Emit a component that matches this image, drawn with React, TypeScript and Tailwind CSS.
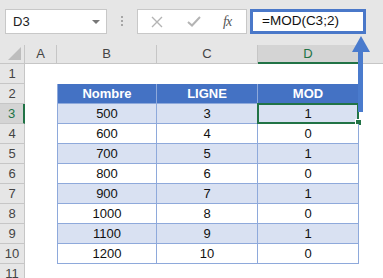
import React from "react";

const rows = [
  { n: 500, l: 3, m: 1 },
  { n: 600, l: 4, m: 0 },
  { n: 700, l: 5, m: 1 },
  { n: 800, l: 6, m: 0 },
  { n: 900, l: 7, m: 1 },
  { n: 1000, l: 8, m: 0 },
  { n: 1100, l: 9, m: 1 },
  { n: 1200, l: 10, m: 0 },
];

function FormulaBar() {
  return (
    <div className="h-[45px] bg-[#e6e6e6] flex items-start pt-[9px] pl-[5px]">
      <div className="w-[102px] h-[25px] bg-white border border-[#c8c8c8] flex items-center justify-between pl-[7px] pr-[6px] text-[13px] text-[#222]">
        <span>D3</span>
        <span className="w-0 h-0 border-x-[4px] border-x-transparent border-t-[4px] border-t-[#777]" />
      </div>
      <div className="ml-[14px] mt-[7px] flex flex-col gap-[2px]">
        <span className="w-[2px] h-[2px] bg-[#a6a6a6]" />
        <span className="w-[2px] h-[2px] bg-[#a6a6a6]" />
        <span className="w-[2px] h-[2px] bg-[#a6a6a6]" />
      </div>
      <div className="ml-[14px] w-[110px] h-[25px] bg-white border border-[#c8c8c8] flex items-center pl-[13px]">
        <svg width="12" height="12" viewBox="0 0 12 12">
          <path d="M1 1L11 11M11 1L1 11" stroke="#b4b4b4" strokeWidth="1.4" />
        </svg>
        <svg className="ml-[24px]" width="14" height="11" viewBox="0 0 14 11">
          <path d="M1 6L5 9.5L13 1" stroke="#b4b4b4" strokeWidth="2" fill="none" />
        </svg>
        <span className="ml-[22px] font-['Liberation_Serif',serif] italic text-[14px] text-[#555] tracking-[-1px]">fx</span>
      </div>
      <div className="ml-[3px] w-[116px] h-[25px] bg-white border-[3px] border-[#4a78c9] flex items-center pl-[9px] text-[13.5px] text-[#111]">
        =MOD(C3;2)
      </div>
    </div>
  );
}

function Sheet() {
  const hdr = "flex items-center justify-center bg-[#e6e6e6] border-r border-b border-[#c6c6c6] text-[#444]";
  const rowHdr = "flex items-center justify-center bg-[#e6e6e6] border-r border-b border-[#c6c6c6] text-[#444]";
  const cell = "flex items-center justify-center border-r border-b border-[#8ea9db] text-[#111]";
  return (
    <div className="grid grid-cols-[25px_32px_100px_101px_101px_1fr] grid-rows-[19px_repeat(11,20px)] text-[13px]">
      <div className="relative bg-[#e6e6e6] border-r border-b border-[#c6c6c6]">
        <span className="absolute right-[3px] bottom-[3px] w-0 h-0 border-l-[13px] border-l-transparent border-b-[13px] border-b-[#bdbdbd]" />
      </div>
      <div className={hdr}>A</div>
      <div className={hdr}>B</div>
      <div className={hdr}>C</div>
      <div className="flex items-center justify-center bg-[#d4d4d4] border-r border-[#c6c6c6] border-b-2 border-b-[#217346] text-[#217346]">D</div>
      <div className="bg-[#e6e6e6] border-b border-[#c6c6c6]" />

      <div className={rowHdr}>1</div>
      <div className="col-span-5" />

      <div className={rowHdr}>2</div>
      <div />
      <div className="flex items-center justify-center bg-[#4472c4] text-white font-bold border-l border-r border-b border-[#8ea9db]">Nombre</div>
      <div className="flex items-center justify-center bg-[#4472c4] text-white font-bold border-r border-b border-[#8ea9db]">LIGNE</div>
      <div className="flex items-center justify-center bg-[#4472c4] text-white font-bold border-r border-b border-[#8ea9db]">MOD</div>
      <div />

      {rows.map((r, i) => {
        const band = i % 2 === 0 ? "bg-[#d9e1f2]" : "bg-white";
        const sel = i === 0;
        return (
          <React.Fragment key={r.n}>
            <div
              className={
                sel
                  ? "flex items-center justify-center bg-[#d4d4d4] border-b border-[#c6c6c6] border-r-2 border-r-[#217346] text-[#217346]"
                  : rowHdr
              }
            >
              {i + 3}
            </div>
            <div />
            <div className={`${cell} ${band} border-l`}>{r.n}</div>
            <div className={`${cell} ${band}`}>{r.l}</div>
            <div className={`${cell} ${band} relative`}>
              {r.m}
              {sel && (
                <>
                  <span className="absolute -inset-[1px] border-2 border-[#217346]" />
                  <span className="absolute right-[-3px] bottom-[-2px] w-[5px] h-[5px] bg-[#217346] outline outline-1 outline-white" />
                </>
              )}
            </div>
            <div />
          </React.Fragment>
        );
      })}

      <div className={rowHdr}>11</div>
      <div className="col-span-5" />
    </div>
  );
}

export default function App() {
  return (
    <div className="relative w-[383px] h-[278px] overflow-hidden bg-white font-['Liberation_Sans',Arial,sans-serif]">
      <FormulaBar />
      <Sheet />
      <svg className="absolute left-[351px] top-[35px]" width="20" height="80" viewBox="0 0 20 80">
        <rect x="7" y="16" width="5" height="61" fill="#4a7bcd" />
        <polygon points="1,17 19,17 10,1" fill="#4a7bcd" />
      </svg>
    </div>
  );
}
